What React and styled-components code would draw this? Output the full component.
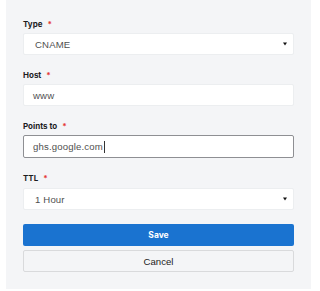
import React from "react";
import styled, { createGlobalStyle } from "styled-components";

const Global = createGlobalStyle`
  html, body { margin: 0; padding: 0; background: #ffffff; }
  body { font-family: "Liberation Sans", Arial, sans-serif; }
`;

const Panel = styled.div`
  margin-left: 6px;
  width: 305px;
  height: 289px;
  box-sizing: border-box;
  background: #f4f5f7;
  padding: 19px 17px 17px 17px;
  display: flex;
  flex-direction: column;
`;

const Field = styled.div`
  display: flex;
  flex-direction: column;
  margin-bottom: ${(p) => p.$gap}px;
`;

const Label = styled.div`
  font-family: "Inter", "Liberation Sans", sans-serif;
  font-weight: 700;
  font-size: 8px;
  line-height: 10px;
  color: #1d1d1f;
  margin-bottom: ${(p) => p.$mb ?? 4}px;
  display: flex;
  align-items: flex-start;
`;

const Star = styled.span`
  color: #e53935;
  margin-left: 5px;
  font-weight: 700;
`;

const Box = styled.div`
  height: ${(p) => (p.$focused ? 23 : 22)}px;
  box-sizing: border-box;
  background: #ffffff;
  border: 1px solid ${(p) => (p.$focused ? "#8e8f93" : "#eceef0")};
  border-radius: 2px;
  display: flex;
  align-items: center;
  padding-left: ${(p) => (p.$select ? 11 : 9)}px;
  padding-right: 4px;
  font-family: "Liberation Sans", Arial, sans-serif;
  font-size: 9.6px;
  color: #505050;
  letter-spacing: 0.15px;
`;

const Value = styled.span`
  flex: 1;
`;

const Caret = styled.span`
  display: inline-block;
  width: 1px;
  height: 12px;
  background: #333;
  margin-left: 1px;
`;

const Arrow = styled.svg`
  width: 4px;
  height: 4px;
  margin-right: 2px;
`;

const PrimaryButton = styled.button`
  height: 22px;
  border: none;
  border-radius: 2px;
  background: #1a73d0;
  color: #ffffff;
  font-family: "Inter", "Liberation Sans", sans-serif;
  font-weight: 700;
  font-size: 8.5px;
  margin-bottom: 4px;
  padding: 0;
`;

const SecondaryButton = styled.button`
  height: 22px;
  box-sizing: border-box;
  border: 1px solid #d9dadc;
  border-radius: 2px;
  background: #f4f5f7;
  color: #222;
  font-family: "Liberation Sans", Arial, sans-serif;
  font-size: 9.6px;
  padding: 0;
`;

const SelectArrow = () => (
  <Arrow viewBox="0 0 4 4">
    <path d="M0 0.5 H4 L2 3.5 Z" fill="#111" />
  </Arrow>
);

export default function App() {
  return (
    <>
      <Global />
      <Panel>
        <Field $gap={15}>
          <Label>
            Type<Star>*</Star>
          </Label>
          <Box $select>
            <Value>CNAME</Value>
            <SelectArrow />
          </Box>
        </Field>
        <Field $gap={15}>
          <Label>
            Host<Star>*</Star>
          </Label>
          <Box>
            <Value>www</Value>
          </Box>
        </Field>
        <Field $gap={15}>
          <Label>
            Points to<Star>*</Star>
          </Label>
          <Box $focused>
            <span>ghs.google.com</span>
            <Caret />
          </Box>
        </Field>
        <Field $gap={14}>
          <Label $mb={5}>
            TTL<Star>*</Star>
          </Label>
          <Box $select>
            <Value>1 Hour</Value>
            <SelectArrow />
          </Box>
        </Field>
        <PrimaryButton>Save</PrimaryButton>
        <SecondaryButton>Cancel</SecondaryButton>
      </Panel>
    </>
  );
}
